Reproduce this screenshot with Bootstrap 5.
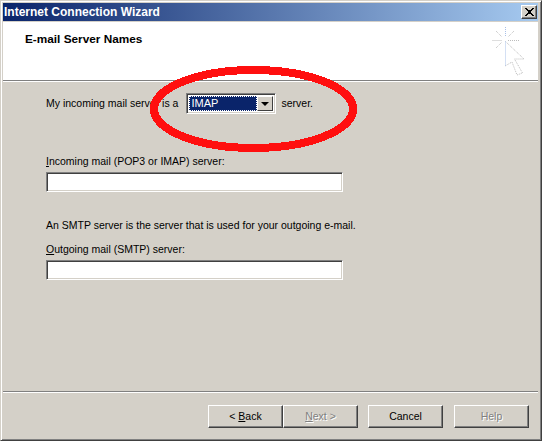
<!DOCTYPE html>
<html lang="en">
<head>
<meta charset="utf-8">
<title>Internet Connection Wizard</title>
<link href="https://cdn.jsdelivr.net/npm/bootstrap@5.3.0/dist/css/bootstrap.min.css" rel="stylesheet">
<style>
html,body{margin:0;height:441px;overflow:hidden;background:#d4d0c8}
body{font:10.5px/13px "Liberation Sans",Arial,sans-serif;color:#000}
.wiz-win{position:relative;width:542px;height:441px;background:#d4d0c8;border:1px solid;border-color:#d4d0c8 #404040 #404040 #d4d0c8;box-shadow:inset 1px 1px 0 #fff,inset -1px -1px 0 #808080;padding:2px 3px 3px 2px}
.wiz-title{height:18px;background:linear-gradient(90deg,#0a246a,#a6caf0);color:#fff;font-weight:700;padding:0 1px 0 1px;flex:none;font-size:12px}
.wiz-close{width:16px;height:14px;background:#d4d0c8;border:1px solid;border-color:#fff #404040 #404040 #fff;box-shadow:inset -1px -1px 0 #808080}
.wiz-head{height:58px;background:#fff;flex:none;padding:11px 13px 0 22px;font-weight:700;font-size:11.8px;margin-top:1px}
.wiz-mark{flex:none;margin-top:-7px}
.wiz-sep{flex:none;height:2px;background:#fff;border-top:1px solid #808080}
.wiz-body{flex:1 1 auto;padding:11px 0 0 43px}
.wiz-combo{width:90px;height:21px;background:#fff;border:1px solid;border-color:#808080 #fff #fff #808080;box-shadow:inset 1px 1px 0 #404040,inset -1px -1px 0 #d4d0c8;padding:2px;margin:0 5px 0 8px}
.wiz-sel{flex:1;background:#0a246a;color:#fff;outline:1px dotted #fff;outline-offset:-1px;padding-left:2px;line-height:15px;font-size:11px}
.wiz-arrow{width:16px;background:#d4d0c8;border:1px solid;border-color:#fff #404040 #404040 #fff}
.wiz-arrow i{width:0;height:0;border:4px solid transparent;border-top-color:#000;border-bottom:0}
.wiz-field{width:297px;height:20px;background:#fff;border:1px solid;border-color:#808080 #fff #fff #808080;box-shadow:inset 1px 1px 0 #404040,inset -1px -1px 0 #d4d0c8;margin-top:4px}
.wiz-lab1{margin-top:41px}
.wiz-note{margin-top:27px}
.wiz-lab2{margin-top:11px}
.wiz-foot{flex:none;padding:12px 9px 9px 0}
.wiz-btn{width:75px;height:23px;padding:0;border-radius:0;font:inherit;color:#000;background:#d4d0c8;border:1px solid;border-color:#fff #404040 #404040 #fff;box-shadow:inset -1px -1px 0 #808080}
.wiz-off{color:#808080;text-shadow:1px 1px 0 #fff}
.wiz-gap1{margin-left:10px}
.wiz-gap2{margin-left:11px}
.wiz-oval{position:absolute;left:-1px;top:-1px;pointer-events:none}
</style>
</head>
<body>
<div class="wiz-win d-flex flex-column">
  <div class="wiz-title d-flex align-items-center justify-content-between">
    <span>Internet Connection Wizard</span>
    <span class="wiz-close d-flex align-items-center justify-content-center"><svg width="9" height="8" viewBox="0 0 9 8" shape-rendering="crispEdges"><path d="M0 0h2v1h1v1h3V1h1V0h2v1H8v1H7v1H6v2h1v1h1v1h1v1H7V7H6V6H3v1H2v1H0V7h1V6h1V5h1V3H2V2H1V1H0z" fill="#000"/></svg></span>
  </div>
  <div class="wiz-head d-flex justify-content-between">
    <span>E-mail Server Names</span>
    <svg class="wiz-mark" width="34" height="50" viewBox="0 0 34 50" fill="none" stroke-width="1" stroke-dasharray="1 1">
      <g stroke="#bcbcbc"><path d="M5 5l6 6M23 5l-6 6M5 22l6-6M1.500 14.500h10M17 14.500h11"/></g>
      <path d="M14.500 1v10" stroke="#a8c0e8"/>
      <path d="M14.500 15.500 33 33h-9.500l8 14-5.500 2-5-13-7 4" stroke="#bcbcbc"/>
      <path d="M14.500 15.500V40" stroke="#a8c0e8"/>
    </svg>
  </div>
  <div class="wiz-sep"></div>
  <div class="wiz-body">
    <div class="d-flex align-items-center"><span>My incoming mail server is a</span><div class="wiz-combo d-flex"><div class="wiz-sel">IMAP</div><div class="wiz-arrow d-flex align-items-center justify-content-center"><i></i></div></div><span>server.</span></div>
    <div class="wiz-lab1"><u>I</u>ncoming mail (POP3 or IMAP) server:</div>
    <div class="wiz-field"></div>
    <div class="wiz-note">An SMTP server is the server that is used for your outgoing e-mail.</div>
    <div class="wiz-lab2"><u>O</u>utgoing mail (SMTP) server:</div>
    <div class="wiz-field"></div>
  </div>
  <div class="wiz-sep"></div>
  <div class="wiz-foot d-flex justify-content-end">
    <button class="wiz-btn">&lt; <u>B</u>ack</button>
    <button class="wiz-btn wiz-off"><u>N</u>ext &gt;</button>
    <button class="wiz-btn wiz-gap1">Cancel</button>
    <button class="wiz-btn wiz-off wiz-gap2">Help</button>
  </div>
  <svg class="wiz-oval" width="542" height="441" viewBox="0 0 542 441" fill="none"><ellipse cx="253.500" cy="109" rx="99.500" ry="39" stroke="#ff0f0f" stroke-width="8" shape-rendering="crispEdges"/></svg>
</div>
</body>
</html>
